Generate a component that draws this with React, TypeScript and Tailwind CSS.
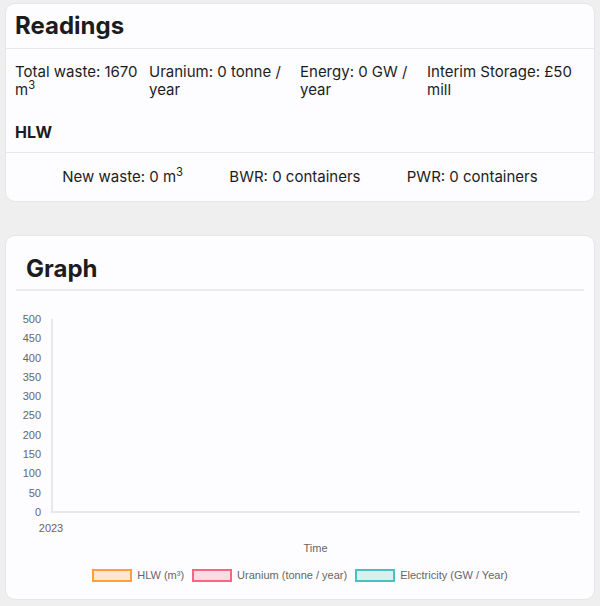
import React from 'react';

const yTicks = [500, 450, 400, 350, 300, 250, 200, 150, 100, 50, 0];

const legend = [
  { label: 'HLW (m³)', border: 'border-[#ff9f40]', fill: 'bg-[#ffe6cc]' },
  { label: 'Uranium (tonne / year)', border: 'border-[#ff6384]', fill: 'bg-[#ffdbe3]' },
  { label: 'Electricity (GW / Year)', border: 'border-[#4bc0c0]', fill: 'bg-[#d7f1f1]' },
];

function Readings() {
  return (
    <section className="bg-[#fdfcff] border border-[#e6e6ea] rounded-[10px] text-[#1c1c1e]">
      <div className="h-[45px] px-[9px] flex items-center border-b border-[#e8e8ec]">
        <h2 className="text-[24px] font-bold leading-none">Readings</h2>
      </div>
      <div className="px-[9px] pt-[14px] grid grid-cols-[134px_151px_127px_1fr] text-[15px] leading-[18px]">
        <div className="pr-2">Total waste: 1670 m<sup className="leading-none">3</sup></div>
        <div className="pr-2">Uranium: 0 tonne / year</div>
        <div className="pr-2">Energy: 0 GW / year</div>
        <div className="pr-2">Interim Storage: £50 mill</div>
      </div>
      <div className="px-[9px] pt-[23px] pb-[10px] border-b border-[#e8e8ec]">
        <h3 className="text-[16px] font-bold leading-[20px]">HLW</h3>
      </div>
      <div className="px-[10px] py-[15px] flex justify-evenly text-[15px] leading-[18px]">
        <span>New waste: 0 m<sup className="leading-none">3</sup></span>
        <span>BWR: 0 containers</span>
        <span>PWR: 0 containers</span>
      </div>
    </section>
  );
}

function Graph() {
  return (
    <section className="bg-[#fdfcff] border border-[#e6e6ea] rounded-[10px] p-[10px] text-[#1c1c1e]">
      <div className="h-[45px] pt-[2px] px-[10px] flex items-center border-b-2 border-[#ececf0]">
        <h2 className="text-[24px] font-bold leading-none">Graph</h2>
      </div>
      <div className="pt-[22px] text-[11px] leading-[13px] text-[#666]" style={{ fontFamily: '"Liberation Sans", Arial, sans-serif' }}>
        <div className="flex">
          <div className="w-[25px] h-[206px] flex flex-col justify-between items-end">
            {yTicks.map((t) => (
              <span key={t}>{t}</span>
            ))}
          </div>
          <div className="ml-[10px] mr-[4px] mt-[6px] flex-1 h-[194px] border-l-2 border-b-2 border-[#e8e8ea]" />
        </div>
        <div className="flex">
          <div className="w-[35px]" />
          <div className="flex-1 mr-[4px] relative h-[16px]">
            <span className="absolute left-0 top-[3px] -translate-x-1/2">2023</span>
          </div>
        </div>
        <div className="flex">
          <div className="w-[35px]" />
          <div className="flex-1 mr-[4px] text-center pt-[7px]">Time</div>
        </div>
        <div className="flex justify-center items-center gap-[8px] pt-[14px] pb-[7px]">
          {legend.map((l) => (
            <div key={l.label} className="flex items-center gap-[5px]">
              <span className={`w-[40px] h-[13px] border-2 ${l.border} ${l.fill}`} />
              <span>{l.label}</span>
            </div>
          ))}
        </div>
      </div>
    </section>
  );
}

export default function App() {
  return (
    <div className="min-h-[606px] bg-[#efeff0] px-[5px] pt-[3px] pb-[6px] flex flex-col gap-[33px]" style={{ fontFamily: 'Inter, "Noto Sans", sans-serif' }}>
      <Readings />
      <Graph />
    </div>
  );
}
